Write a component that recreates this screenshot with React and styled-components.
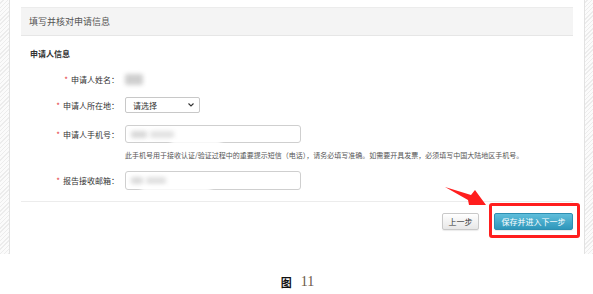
import React from "react";
import styled, { createGlobalStyle } from "styled-components";

const Global = createGlobalStyle`
  html, body { margin: 0; padding: 0; background: #fff; }
  body { font-family: "Noto Sans CJK SC", "Noto Sans", sans-serif; width: 593px; overflow: hidden; }
`;

const Frame = styled.div`
  display: flex;
  height: 254px;
`;

const Hatch = styled.div`
  width: ${(p) => p.$w}px;
  flex: none;
  background: repeating-linear-gradient(
    -45deg,
    #ececec 0px,
    #ececec 1px,
    #fbfbfb 1px,
    #fbfbfb 3px
  );
  ${(p) => (p.$side === "left" ? "border-right: 1px solid #e2e2e2;" : "border-left: 1px solid #e2e2e2;")}
`;

const Main = styled.div`
  flex: 1;
  padding: 7px 11px 0 11px;
`;

const PanelHeader = styled.div`
  height: 27px;
  background: #f4f4f4;
  border-top: 1px solid #ececec;
  border-bottom: 1px solid #e6e6e6;
  display: flex;
  align-items: center;
  padding-left: 8px;
  font-size: 9px;
  color: #555;
`;

const Body = styled.div`
  padding: 0 0 11px 9px;
  border-bottom: 1px solid #ececec;
  display: flex;
  flex-direction: column;
`;

const SectionTitle = styled.div`
  margin-top: 12px;
  line-height: 12px;
  font-size: 8px;
  font-weight: 700;
  color: #333;
`;

const Row = styled.div`
  display: grid;
  grid-template-columns: 89px 1fr;
  column-gap: 6px;
  align-items: center;
  margin-top: ${(p) => p.$mt}px;
  height: ${(p) => p.$h}px;
`;

const Label = styled.div`
  text-align: right;
  font-size: 8px;
  color: #333;
  white-space: nowrap;
`;

const Star = styled.span`
  color: #e4393c;
  margin-right: 3px;
`;

const BlurValue = styled.span`
  display: block;
  width: ${(p) => p.$w}px;
  height: ${(p) => p.$h}px;
  margin-left: ${(p) => p.$ml || 0}px;
  background: ${(p) => p.$c || "#d4d4d4"};
  filter: blur(2px);
  border-radius: 2px;
`;

const SelectBox = styled.div`
  width: 75px;
  height: 16px;
  box-sizing: border-box;
  border: 1px solid #c8c8c8;
  border-radius: 2px;
  display: flex;
  align-items: center;
  justify-content: space-between;
  padding: 0 5px 0 7px;
  font-size: 8px;
  color: #333;
  background: #fff;
`;

const Input = styled.div`
  width: 176px;
  height: ${(p) => p.$h}px;
  box-sizing: border-box;
  border: 1px solid #cfcfcf;
  border-radius: 3px;
  background: #fff;
  display: flex;
  align-items: center;
  gap: 3px;
  padding-left: 5px;
  position: relative;
`;

const Smear = styled.span`
  position: absolute;
  left: ${(p) => p.$l}px;
  bottom: -4px;
  width: ${(p) => p.$w}px;
  height: 6px;
  background: #fff;
  filter: blur(2px);
`;

const Hint = styled.div`
  grid-column: 2;
  font-size: 7px;
  color: #555;
  white-space: nowrap;
  line-height: 10px;
`;

const Footer = styled.div`
  display: flex;
  justify-content: flex-end;
  align-items: center;
  gap: 15px;
  padding-top: 11px;
`;

const Button = styled.div`
  height: 17px;
  box-sizing: border-box;
  padding: 0 ${(p) => (p.$primary ? 6.5 : 5.5)}px;
  border-radius: 2px;
  display: flex;
  align-items: center;
  font-size: 8px;
  color: ${(p) => (p.$primary ? "#fff" : "#333")};
  border: 1px solid ${(p) => (p.$primary ? "#2e8fb2" : "#c9c9c9")};
  background: ${(p) =>
    p.$primary
      ? "linear-gradient(#5fbedb, #2f97bb)"
      : "linear-gradient(#ffffff, #e7e7e7)"};
  box-shadow: 0 1px 1px rgba(0, 0, 0, 0.08);
`;

const Highlight = styled.div`
  position: relative;
`;

const RedBox = styled.div`
  position: absolute;
  left: -5px;
  top: -10px;
  right: -7px;
  bottom: -8px;
  border: 3px solid #ff1e1e;
  border-radius: 3px;
  pointer-events: none;
`;

const Arrow = styled.svg`
  position: absolute;
  left: -48px;
  top: -21px;
`;

const Caption = styled.div`
  margin-top: 20px;
  display: flex;
  justify-content: center;
  align-items: center;
  gap: 9px;
  padding-left: 2px;
`;

const CapWord = styled.span`
  font-size: 11px;
  color: #111;
  font-weight: 700;
`;

const CapNum = styled.span`
  font-family: "Liberation Serif", serif;
  font-size: 14px;
  color: #6a5847;
`;

export default function App() {
  return (
    <>
      <Global />
      <Frame>
        <Hatch $w={9} $side="left" />
        <Main>
          <PanelHeader>填写并核对申请信息</PanelHeader>
          <Body>
            <SectionTitle>申请人信息</SectionTitle>
            <Row $mt={11} $h={16}>
              <Label><Star>*</Star>申请人姓名：</Label>
              <BlurValue $w={18} $h={11} $c="#cfcfcf" />
            </Row>
            <Row $mt={10} $h={16}>
              <Label><Star>*</Star>申请人所在地：</Label>
              <SelectBox>
                <span>请选择</span>
                <svg width="6" height="4" viewBox="0 0 6 4">
                  <path d="M0.5 0.5 L3 3 L5.5 0.5" fill="none" stroke="#333" strokeWidth="1.1" />
                </svg>
              </SelectBox>
            </Row>
            <Row $mt={12} $h={18}>
              <Label><Star>*</Star>申请人手机号：</Label>
              <Input $h={18}>
                <BlurValue $w={16} $h={7} $c="#d8d8d8" />
                <BlurValue $w={24} $h={7} $c="#e2e2e2" />
                <Smear $l={45} $w={50} />
              </Input>
            </Row>
            <Row $mt={7} $h={10}>
              <Hint>
                此手机号用于接收认证/验证过程中的重要提示短信（电话），请务必填写准确。如需要开具发票，必须填写中国大陆地区手机号。
              </Hint>
            </Row>
            <Row $mt={11} $h={19}>
              <Label><Star>*</Star>报告接收邮箱：</Label>
              <Input $h={19}>
                <BlurValue $w={12} $h={7} $c="#dadada" />
                <BlurValue $w={20} $h={7} $c="#e0e0e0" />
                <Smear $l={15} $w={70} />
              </Input>
            </Row>
          </Body>
          <Footer>
            <Button>上一步</Button>
            <Highlight>
              <Button $primary>保存并进入下一步</Button>
              <RedBox>
                <Arrow width="46" height="24" viewBox="0 0 46 24">
                  <polygon points="1,2 27,10 31,5 42,20 25,20 24,15" fill="#ff1e1e" />
                </Arrow>
              </RedBox>
            </Highlight>
          </Footer>
        </Main>
        <Hatch $w={8} $side="right" />
      </Frame>
      <Caption>
        <CapWord>图</CapWord>
        <CapNum>11</CapNum>
      </Caption>
    </>
  );
}
